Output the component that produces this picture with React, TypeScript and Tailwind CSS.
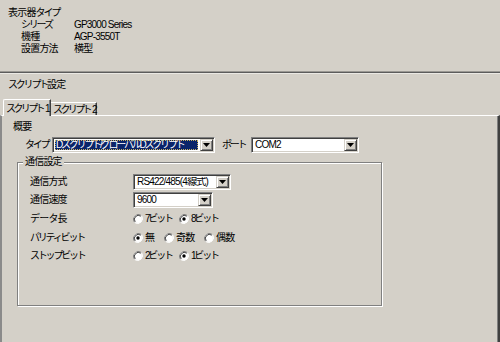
import React from 'react';

// kana in Noto are full width; MS UI Gothic kana are narrow, so tighten them
const kana = 'tracking-[-2.2px]';

const Arrow: React.FC = () => (
  <svg width="7" height="4" viewBox="0 0 7 4" className="block">
    <path d="M0 0h7L3.5 4z" fill="#000" />
  </svg>
);

const Combo: React.FC<{ className: string; value: string; selected?: boolean; tight?: boolean }> = ({ className, value, selected, tight }) => (
  <div className={`flex shrink-0 h-[16px] border border-t-[#808080] border-l-[#808080] border-r-white border-b-white ${className}`}>
    <div className="flex flex-1 min-w-0 bg-white shadow-[inset_1px_1px_0_#404040,inset_-1px_-1px_0_#d4d0c8] p-[1px] pl-[2px]">
      <div
        className={`flex flex-1 items-center min-w-0 my-[1px] mr-[2px] px-[1px] overflow-hidden ${tight ? kana : ''} ${
          selected ? 'bg-[#0a246a] text-white outline outline-1 outline-dotted outline-[#c8b060] -outline-offset-1' : 'text-black'
        }`}
      >
        {value}
      </div>
      <div className="flex w-[13px] h-[12px] items-center justify-center bg-[#d4d0c8] border border-t-[#d4d0c8] border-l-[#d4d0c8] border-r-[#404040] border-b-[#404040] shadow-[inset_1px_1px_0_white,inset_-1px_-1px_0_#808080]">
        <Arrow />
      </div>
    </div>
  </div>
);

const Radio: React.FC<{ checked?: boolean; label: string; className: string; tight?: boolean }> = ({ checked, label, className, tight }) => (
  <div className={`flex items-center gap-[2px] shrink-0 ${className}`}>
    <svg width="10" height="10" viewBox="0 0 10 10" className="block shrink-0">
      <path d="M8.5 1.5A5 5 0 0 0 1.5 8.5" stroke="#808080" strokeWidth="1" fill="none" />
      <circle cx="5" cy="5" r="3.9" fill="#fff" />
      <path d="M7.8 2.2A4 4 0 0 0 2.2 7.8" stroke="#404040" strokeWidth="1" fill="none" />
      <path d="M1.5 8.5A5 5 0 0 0 8.5 1.5" stroke="#ffffff" strokeWidth="1" fill="none" />
      {checked && <circle cx="5" cy="5" r="1.7" fill="#000" />}
    </svg>
    <span className={tight ? kana : ''}>{label}</span>
  </div>
);

const Row: React.FC<{ label: string; className: string; children: React.ReactNode; tight?: boolean }> = ({ label, className, children, tight }) => (
  <div className={`flex items-center h-[16px] ${className}`}>
    <span className={`w-[103px] shrink-0 ${tight ? kana : ''}`}>{label}</span>
    {children}
  </div>
);

export default function App() {
  return (
    <div className="w-[500px] h-[342px] overflow-hidden whitespace-nowrap bg-[#d4d0c8] text-black text-[10px] leading-[12px] tracking-[-0.8px] font-['Liberation_Sans','Noto_Sans_CJK_JP',sans-serif]">
      {/* 表示器タイプ */}
      <div className="h-[71px] pl-[8px] pt-[7px]">
        <div>表示器<span className={kana}>タイプ</span></div>
        <div className="pl-[13px]">
          <div className="flex"><span className={`w-[53px] ${kana}`}>シリーズ</span><span>GP3000 Series</span></div>
          <div className="flex"><span className="w-[53px]">機種</span><span>AGP-3550T</span></div>
          <div className="flex"><span className="w-[53px]">設置方法</span><span>横型</span></div>
        </div>
      </div>

      {/* separator */}
      <div className="h-[1px] bg-[#9a9893]" />
      <div className="h-[1px] bg-[#5c5c5c]" />
      <div className="h-[1px] bg-[#ebe9e4]" />

      <div className="pl-[8px] pt-[5px] h-[25px]"><span className={kana}>スクリプト</span>設定</div>

      {/* tabs */}
      <div className="flex items-end h-[16px] pl-[3px]">
        <div className="relative z-10 w-[48px] h-[17px] -mb-[1px] pl-[2px] pt-[3px] bg-[#d4d0c8] border-l border-t border-white border-r border-r-[#404040] shadow-[inset_-1px_0_0_#808080] rounded-tl-[2px]">
          <span className="tracking-[-2.6px]">スクリプト</span><span className="pl-[2px]">1</span>
        </div>
        <div className="w-[46px] h-[13px] pl-[2px] pt-[1px] bg-[#d4d0c8] border-t border-white border-r border-r-[#404040] shadow-[inset_-1px_0_0_#808080]">
          <span className="tracking-[-2.6px]">スクリプト</span><span className="pl-[2px]">2</span>
        </div>
      </div>

      {/* pane */}
      <div className="h-[300px] border-t border-white border-l-2 border-l-[#8a8a8a] border-r-2 border-r-[#404040] shadow-[inset_-1px_0_0_#808080]">
        <div className="pl-[11px] pt-[5px] h-[17px]">概要</div>
        <div className="flex items-center h-[16px] mt-[4px]">
          <span className={`pl-[23px] w-[50px] shrink-0 ${kana}`}>タイプ</span>
          <Combo className="w-[163px]" value="Dスクリプト/グローバルDスクリプト" selected tight />
          <span className={`pl-[7px] w-[36px] shrink-0 ${kana}`}>ポート</span>
          <Combo className="w-[108px]" value="COM2" />
        </div>

        {/* 通信設定 group */}
        <div className="relative ml-[15px] mt-[9px] w-[365px] h-[144px] border border-[#808080] shadow-[inset_1px_1px_0_white,1px_1px_0_white]">
          <span className="absolute -top-[7px] left-[5px] px-[2px] bg-[#d4d0c8]">通信設定</span>
          <div className="pl-[12px] pt-[11px]">
            <Row label="通信方式" className="">
              <Combo className="w-[98px]" value="RS422/485(4線式)" />
            </Row>
            <Row label="通信速度" className="mt-[2px]">
              <Combo className="w-[80px]" value="9600" />
            </Row>
            <Row label="データ長" className="mt-[3px]">
              <Radio label="7ビット" className="w-[46px]" tight />
              <Radio label="8ビット" checked className="w-[46px]" tight />
            </Row>
            <Row label="パリティビット" className="mt-[3px]" tight>
              <Radio label="無" checked className="w-[31px]" />
              <Radio label="奇数" className="w-[40px]" />
              <Radio label="偶数" className="w-[40px]" />
            </Row>
            <Row label="ストップビット" className="mt-[2px]" tight>
              <Radio label="2ビット" className="w-[46px]" tight />
              <Radio label="1ビット" checked className="w-[46px]" tight />
            </Row>
          </div>
        </div>
      </div>
    </div>
  );
}
